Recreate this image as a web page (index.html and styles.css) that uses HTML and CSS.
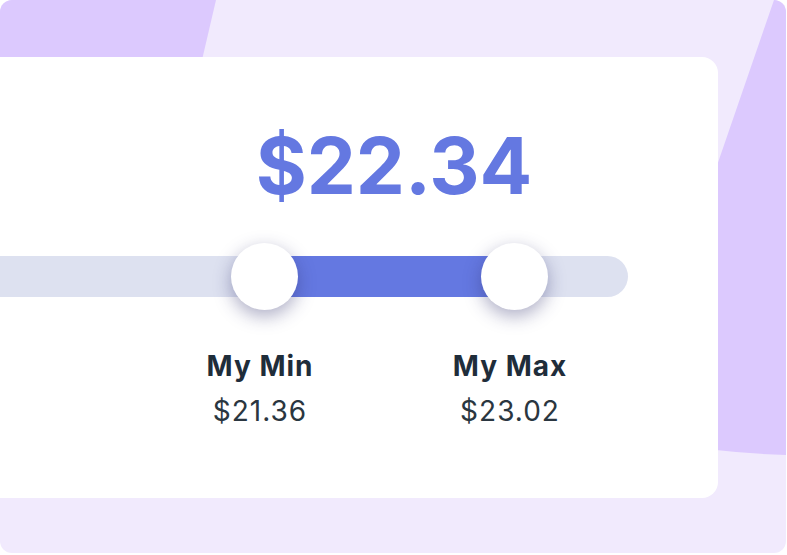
FILE: index.html
```html
<!DOCTYPE html>
<html lang="en">
<head>
  <meta charset="UTF-8">
  <meta name="viewport" content="width=device-width, initial-scale=1.0">
  <title>Price range</title>
  <link rel="stylesheet" href="styles.css">
</head>
<body>
  <div class="frame">
    <!-- decorative purple shapes behind the card -->
    <svg class="backdrop" width="786" height="553" viewBox="0 0 786 553" aria-hidden="true">
      <polygon points="0,0 216,0 160,240 0,240" fill="#dcc9fe"/>
      <path d="M774 0 L790 0 L790 455 Q750 454 716 450 L619 450 Z" fill="#dcc9fe"/>
    </svg>

    <div class="card">
      <div class="readout">$22.34</div>

      <div class="slider">
        <div class="track">
          <div class="fill" style="left: 264px; width: 250px;"></div>
        </div>
        <div class="thumb" style="left: 231px;"></div>
        <div class="thumb" style="left: 481px;"></div>
      </div>

      <div class="stops">
        <div class="stop">
          <div class="stop-label">My Min</div>
          <div class="stop-value">$21.36</div>
        </div>
        <div class="stop">
          <div class="stop-label">My Max</div>
          <div class="stop-value">$23.02</div>
        </div>
      </div>
    </div>
  </div>
</body>
</html>
```

FILE: styles.css
```css
/* base */
body {
  margin: 0;
  background: #ffffff;
  font-family: Inter, "Liberation Sans", sans-serif;
}

/* outer lavender panel */
.frame {
  position: relative;
  width: 786px;
  height: 553px;
  padding-top: 57px;
  box-sizing: border-box;
  background: #f1eafd;
  border-radius: 12px;
  overflow: hidden;
}
.backdrop {
  position: absolute;
  top: 0;
  left: 0;
}

/* white card, cut off on the left */
.card {
  position: relative;
  z-index: 1;
  width: 718px;
  height: 441px;
  padding-top: 70px;
  box-sizing: border-box;
  background: #ffffff;
  border-radius: 0 16px 16px 0;
}

/* big price */
.readout {
  margin-left: 160px;
  width: 468px;
  text-align: center;
  font-size: 78px;
  line-height: 1;
  font-weight: 700;
  color: #6478e1;
}

/* range slider */
.slider {
  position: relative;
  width: 628px;
  height: 67px;
  margin-top: 38px;
  padding-top: 13px;
  box-sizing: border-box;
}
.track {
  position: relative;
  height: 41px;
  background: #dde1f0;
  border-radius: 0 21px 21px 0;
}
.fill {
  position: absolute;
  top: 0;
  bottom: 0;
  background: #6478e1;
}
.thumb {
  position: absolute;
  top: 0;
  width: 67px;
  height: 67px;
  border-radius: 50%;
  background: #ffffff;
  box-shadow: 0 6px 18px rgba(50, 50, 110, 0.4);
}

/* min / max labels */
.stops {
  display: flex;
  margin-left: 135px;
  margin-top: 42px;
}
.stop {
  width: 250px;
  text-align: center;
  color: #1f2d3a;
}
.stop-label {
  font-size: 28px;
  line-height: 1;
  font-weight: 700;
  letter-spacing: 1px;
}
.stop-value {
  margin-top: 17px;
  font-size: 28px;
  line-height: 1;
  font-weight: 400;
  letter-spacing: 1px;
  color: #2a3640;
}
```
